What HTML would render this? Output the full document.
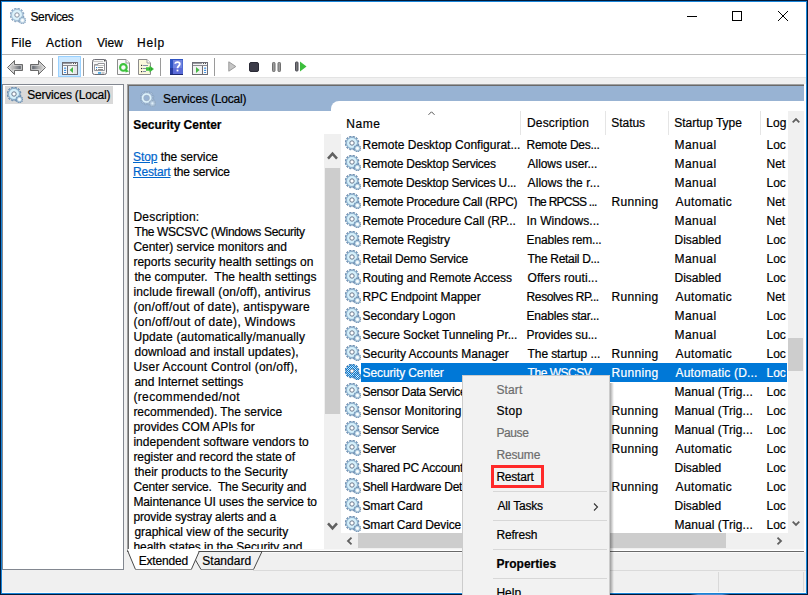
<!DOCTYPE html>
<html><head><meta charset="utf-8">
<style>
*{margin:0;padding:0;box-sizing:border-box}
html,body{width:808px;height:595px;overflow:hidden;background:#fff}
body{position:relative;font-family:"Liberation Sans",sans-serif;font-size:12px;color:#000}
.a{position:absolute}
.t{position:absolute;white-space:pre;line-height:15px;-webkit-text-stroke:0.2px currentColor}
svg{position:absolute;overflow:visible}
</style></head><body>
<svg width="0" height="0" style="position:absolute">
<defs>
<radialGradient id="gg" cx="0.5" cy="0.5" r="0.5">
<stop offset="0" stop-color="#ffffff"/><stop offset="0.4" stop-color="#d9f1fb"/><stop offset="0.72" stop-color="#b0d3e8"/><stop offset="1" stop-color="#5b80a6"/>
</radialGradient>
<radialGradient id="gs" cx="0.5" cy="0.5" r="0.5">
<stop offset="0" stop-color="#ffffff"/><stop offset="0.5" stop-color="#cfe6f2"/><stop offset="1" stop-color="#5b80a6"/>
</radialGradient>
<pattern id="dith" width="2" height="2" patternUnits="userSpaceOnUse"><rect x="0" y="0" width="1" height="1" fill="#0078d7"/><rect x="1" y="1" width="1" height="1" fill="#0078d7"/></pattern>
<mask id="gm" maskUnits="userSpaceOnUse" x="0" y="0" width="16" height="16"><path fill="#fff" stroke="#fff" stroke-width="0.5" d="M12.70,7.00 L12.67,7.60 L14.04,7.93 L13.56,9.72 L12.21,9.32 L11.94,9.85 L11.61,10.35 L12.63,11.32 L11.32,12.63 L10.35,11.61 L9.85,11.94 L9.32,12.21 L9.72,13.56 L7.93,14.04 L7.60,12.67 L7.00,12.70 L6.40,12.67 L6.07,14.04 L4.28,13.56 L4.68,12.21 L4.15,11.94 L3.65,11.61 L2.68,12.63 L1.37,11.32 L2.39,10.35 L2.06,9.85 L1.79,9.32 L0.44,9.72 L-0.04,7.93 L1.33,7.60 L1.30,7.00 L1.33,6.40 L-0.04,6.07 L0.44,4.28 L1.79,4.68 L2.06,4.15 L2.39,3.65 L1.37,2.68 L2.68,1.37 L3.65,2.39 L4.15,2.06 L4.68,1.79 L4.28,0.44 L6.07,-0.04 L6.40,1.33 L7.00,1.30 L7.60,1.33 L7.93,-0.04 L9.72,0.44 L9.32,1.79 L9.85,2.06 L10.35,2.39 L11.32,1.37 L12.63,2.68 L11.61,3.65 L11.94,4.15 L12.21,4.68 L13.56,4.28 L14.04,6.07 L12.67,6.40 Z"/><path fill="#fff" stroke="#fff" stroke-width="0.45" d="M14.87,11.60 L14.95,11.91 L15.96,11.84 L15.96,12.96 L14.95,12.89 L14.87,13.20 L14.75,13.51 L15.61,14.03 L14.95,14.95 L14.18,14.30 L13.93,14.50 L13.65,14.68 L14.03,15.61 L12.96,15.96 L12.73,14.98 L12.40,15.00 L12.07,14.98 L11.84,15.96 L10.77,15.61 L11.15,14.68 L10.87,14.50 L10.62,14.30 L9.85,14.95 L9.19,14.03 L10.05,13.51 L9.93,13.20 L9.85,12.89 L8.84,12.96 L8.84,11.84 L9.85,11.91 L9.93,11.60 L10.05,11.29 L9.19,10.77 L9.85,9.85 L10.62,10.50 L10.87,10.30 L11.15,10.12 L10.77,9.19 L11.84,8.84 L12.07,9.82 L12.40,9.80 L12.73,9.82 L12.96,8.84 L14.03,9.19 L13.65,10.12 L13.93,10.30 L14.18,10.50 L14.95,9.85 L15.61,10.77 L14.75,11.29 Z"/><circle cx="7" cy="7" r="2.1" fill="#000"/></mask>
<symbol id="gear" viewBox="0 0 16 16">
<path fill="url(#gg)" stroke="#6587ab" stroke-width="0.5" d="M12.70,7.00 L12.67,7.60 L14.04,7.93 L13.56,9.72 L12.21,9.32 L11.94,9.85 L11.61,10.35 L12.63,11.32 L11.32,12.63 L10.35,11.61 L9.85,11.94 L9.32,12.21 L9.72,13.56 L7.93,14.04 L7.60,12.67 L7.00,12.70 L6.40,12.67 L6.07,14.04 L4.28,13.56 L4.68,12.21 L4.15,11.94 L3.65,11.61 L2.68,12.63 L1.37,11.32 L2.39,10.35 L2.06,9.85 L1.79,9.32 L0.44,9.72 L-0.04,7.93 L1.33,7.60 L1.30,7.00 L1.33,6.40 L-0.04,6.07 L0.44,4.28 L1.79,4.68 L2.06,4.15 L2.39,3.65 L1.37,2.68 L2.68,1.37 L3.65,2.39 L4.15,2.06 L4.68,1.79 L4.28,0.44 L6.07,-0.04 L6.40,1.33 L7.00,1.30 L7.60,1.33 L7.93,-0.04 L9.72,0.44 L9.32,1.79 L9.85,2.06 L10.35,2.39 L11.32,1.37 L12.63,2.68 L11.61,3.65 L11.94,4.15 L12.21,4.68 L13.56,4.28 L14.04,6.07 L12.67,6.40 Z"/>
<circle cx="7" cy="7" r="4.0" fill="none" stroke="#d8f2fc" stroke-width="1.4"/>
<circle cx="7" cy="7" r="2.2" fill="#fff" stroke="#66768c" stroke-width="1"/>
<path fill="url(#gs)" stroke="#6c90b4" stroke-width="0.45" d="M14.87,11.60 L14.95,11.91 L15.96,11.84 L15.96,12.96 L14.95,12.89 L14.87,13.20 L14.75,13.51 L15.61,14.03 L14.95,14.95 L14.18,14.30 L13.93,14.50 L13.65,14.68 L14.03,15.61 L12.96,15.96 L12.73,14.98 L12.40,15.00 L12.07,14.98 L11.84,15.96 L10.77,15.61 L11.15,14.68 L10.87,14.50 L10.62,14.30 L9.85,14.95 L9.19,14.03 L10.05,13.51 L9.93,13.20 L9.85,12.89 L8.84,12.96 L8.84,11.84 L9.85,11.91 L9.93,11.60 L10.05,11.29 L9.19,10.77 L9.85,9.85 L10.62,10.50 L10.87,10.30 L11.15,10.12 L10.77,9.19 L11.84,8.84 L12.07,9.82 L12.40,9.80 L12.73,9.82 L12.96,8.84 L14.03,9.19 L13.65,10.12 L13.93,10.30 L14.18,10.50 L14.95,9.85 L15.61,10.77 L14.75,11.29 Z"/>
<circle cx="12.4" cy="12.4" r="1.1" fill="#fff"/>
</symbol>
<symbol id="gearf" viewBox="0 0 16 16">
<path fill="#a9bfd8" stroke="#7f98b4" stroke-width="0.5" d="M12.70,7.00 L12.67,7.60 L14.04,7.93 L13.56,9.72 L12.21,9.32 L11.94,9.85 L11.61,10.35 L12.63,11.32 L11.32,12.63 L10.35,11.61 L9.85,11.94 L9.32,12.21 L9.72,13.56 L7.93,14.04 L7.60,12.67 L7.00,12.70 L6.40,12.67 L6.07,14.04 L4.28,13.56 L4.68,12.21 L4.15,11.94 L3.65,11.61 L2.68,12.63 L1.37,11.32 L2.39,10.35 L2.06,9.85 L1.79,9.32 L0.44,9.72 L-0.04,7.93 L1.33,7.60 L1.30,7.00 L1.33,6.40 L-0.04,6.07 L0.44,4.28 L1.79,4.68 L2.06,4.15 L2.39,3.65 L1.37,2.68 L2.68,1.37 L3.65,2.39 L4.15,2.06 L4.68,1.79 L4.28,0.44 L6.07,-0.04 L6.40,1.33 L7.00,1.30 L7.60,1.33 L7.93,-0.04 L9.72,0.44 L9.32,1.79 L9.85,2.06 L10.35,2.39 L11.32,1.37 L12.63,2.68 L11.61,3.65 L11.94,4.15 L12.21,4.68 L13.56,4.28 L14.04,6.07 L12.67,6.40 Z"/>
<circle cx="6.6" cy="7" r="3.9" fill="#98b3d3" stroke="#def3fb" stroke-width="1.9"/>
<circle cx="6.6" cy="7" r="2.9" fill="none" stroke="#a0a8b8" stroke-width="0.5"/>
<path fill="#b4c9de" stroke="#8aa0b8" stroke-width="0.45" d="M14.87,11.60 L14.95,11.91 L15.96,11.84 L15.96,12.96 L14.95,12.89 L14.87,13.20 L14.75,13.51 L15.61,14.03 L14.95,14.95 L14.18,14.30 L13.93,14.50 L13.65,14.68 L14.03,15.61 L12.96,15.96 L12.73,14.98 L12.40,15.00 L12.07,14.98 L11.84,15.96 L10.77,15.61 L11.15,14.68 L10.87,14.50 L10.62,14.30 L9.85,14.95 L9.19,14.03 L10.05,13.51 L9.93,13.20 L9.85,12.89 L8.84,12.96 L8.84,11.84 L9.85,11.91 L9.93,11.60 L10.05,11.29 L9.19,10.77 L9.85,9.85 L10.62,10.50 L10.87,10.30 L11.15,10.12 L10.77,9.19 L11.84,8.84 L12.07,9.82 L12.40,9.80 L12.73,9.82 L12.96,8.84 L14.03,9.19 L13.65,10.12 L13.93,10.30 L14.18,10.50 L14.95,9.85 L15.61,10.77 L14.75,11.29 Z"/>
<circle cx="12.4" cy="12.4" r="1.1" fill="#dfeef7"/>
</symbol>
</defs>
</svg>

<!-- window border -->

<!-- title bar -->
<svg style="left:10px;top:8px;opacity:.8" width="16" height="16"><use href="#gear"/></svg>
<div class="a" style="left:687px;top:16px;width:10px;height:1px;background:#000"></div>
<div class="a" style="left:732px;top:11px;width:10px;height:10px;border:1px solid #000"></div>
<svg style="left:778px;top:11px" width="10" height="10"><path d="M0,0 L10,10 M10,0 L0,10" stroke="#000" stroke-width="1"/></svg>

<!-- menu bar -->
<div class="a" style="left:2px;top:54px;width:804px;height:1px;background:#b4b4b4"></div>

<!-- toolbar area -->
<div class="a" style="left:2px;top:77px;width:804px;height:1px;background:#e3e3e3"></div>
<div class="a" style="left:2px;top:78px;width:804px;height:515px;background:#f0f0f0"></div>


<!-- toolbar icons -->
<svg style="left:7px;top:60px" width="16" height="15"><defs><linearGradient id="ag" x1="0" y1="0" x2="1" y2="0"><stop offset="0" stop-color="#e0e0e0"/><stop offset="0.45" stop-color="#b0b0b0"/><stop offset="0.8" stop-color="#6f747c"/><stop offset="1" stop-color="#8a8a8a"/></linearGradient><linearGradient id="ag2" x1="1" y1="0" x2="0" y2="0"><stop offset="0" stop-color="#e0e0e0"/><stop offset="0.45" stop-color="#b0b0b0"/><stop offset="0.8" stop-color="#6f747c"/><stop offset="1" stop-color="#8a8a8a"/></linearGradient></defs><path d="M0.5,7.5 L7.5,0.5 L7.5,4.5 L15.5,4.5 L15.5,10.5 L7.5,10.5 L7.5,14.5 Z" fill="url(#ag)" stroke="#6a6a6a" stroke-width="1" stroke-linejoin="round"/><path d="M2,7.5 L6.5,3 L6.5,5.5 L14.5,5.5 L14.5,9.5 L6.5,9.5 L6.5,12 Z" fill="none" stroke="#e6e6e6" stroke-width="0.6"/></svg>
<svg style="left:30px;top:60px" width="16" height="15"><path d="M15.5,7.5 L8.5,0.5 L8.5,4.5 L0.5,4.5 L0.5,10.5 L8.5,10.5 L8.5,14.5 Z" fill="url(#ag2)" stroke="#6a6a6a" stroke-width="1" stroke-linejoin="round"/><path d="M14,7.5 L9.5,3 L9.5,5.5 L1.5,5.5 L1.5,9.5 L9.5,9.5 L9.5,12 Z" fill="none" stroke="#e6e6e6" stroke-width="0.6"/></svg>
<div class="a" style="left:52px;top:58px;width:1px;height:18px;background:#9a9a9a"></div>
<div class="a" style="left:58px;top:56px;width:23px;height:21px;background:#cce8ff;border:1px solid #99d1ff"></div>
<svg style="left:62px;top:62px" width="16" height="13"><rect x="0.5" y="0.5" width="15" height="12" fill="#f2f2f2" stroke="#6d6d75"/><line x1="1" y1="1.5" x2="10" y2="1.5" stroke="#9a9aa0"/><rect x="11" y="1" width="1" height="1" fill="#555"/><rect x="13" y="1" width="1" height="1" fill="#555"/><line x1="1" y1="3.5" x2="15" y2="3.5" stroke="#8a8a90"/><line x1="5.5" y1="4" x2="5.5" y2="12" stroke="#6d6d75"/><rect x="1" y="4" width="4" height="8" fill="#fafafa"/><rect x="2" y="5.5" width="2.2" height="1.2" rx="0.5" fill="#3d8ee0"/><rect x="2" y="7.7" width="2.2" height="1.2" rx="0.5" fill="#3d8ee0"/><rect x="2" y="9.9" width="2.2" height="1.2" rx="0.5" fill="#3d8ee0"/><rect x="12" y="4" width="3" height="8" fill="#e6e6e6"/><path d="M11,5 L7.6,8 L11,11 Z" fill="#45b845"/></svg>
<div class="a" style="left:83px;top:58px;width:1px;height:18px;background:#9a9a9a"></div>
<svg style="left:92px;top:59px" width="15" height="16"><rect x="0.5" y="0.5" width="14" height="15" rx="2" fill="#f7f7f7" stroke="#6d6d75"/><rect x="12" y="1" width="1.5" height="1.5" fill="#555"/><line x1="1" y1="2.5" x2="11" y2="2.5" stroke="#c8c8c8"/><path d="M2.5,5.5 L6,5.5 L6,4.5 L12.5,4.5 L12.5,11.5 L2.5,11.5 Z" fill="#fff" stroke="#8a8a90" stroke-width="0.9"/><line x1="3" y1="6.5" x2="12" y2="6.5" stroke="#c0c0c0"/><rect x="4" y="8" width="1.2" height="1.2" fill="#2b8ae0"/><line x1="6" y1="8.5" x2="11" y2="8.5" stroke="#8a8a8a"/><rect x="4" y="10" width="1" height="1" fill="#777"/><line x1="6" y1="10.5" x2="11" y2="10.5" stroke="#8a8a8a"/><rect x="6" y="13.2" width="3" height="1.5" fill="#2b9be0"/><rect x="9.5" y="13.2" width="3" height="1.5" fill="#bbb"/></svg>
<svg style="left:117px;top:59px" width="14" height="16"><path d="M0.5,0.5 L9,0.5 L12.5,4 L12.5,15.5 L0.5,15.5 Z" fill="#fafafa" stroke="#8c8c8c"/><path d="M9,0.5 L9,4 L12.5,4" fill="#fff" stroke="#9a9a9a"/><circle cx="6.4" cy="8.4" r="3.3" fill="none" stroke="#3cc23c" stroke-width="2.1"/><path d="M7.6,9.6 L12.2,12.2 L8.6,13.4 Z" fill="#3cc23c"/></svg>
<svg style="left:138px;top:59px" width="17" height="16"><path d="M0.5,0.5 L9,0.5 L12.5,4 L12.5,15.5 L0.5,15.5 Z" fill="#fbf8dc" stroke="#8c8c8c"/><path d="M9,0.5 L9,4 L12.5,4" fill="#fff" stroke="#9a9a9a"/><rect x="3" y="5.8" width="1.2" height="1.2" fill="#333"/><line x1="5" y1="6.5" x2="10" y2="6.5" stroke="#8290a8"/><rect x="3" y="8.9" width="1.2" height="1.2" fill="#333"/><line x1="5" y1="9.5" x2="8" y2="9.5" stroke="#8290a8"/><rect x="3" y="12" width="1.2" height="1.2" fill="#333"/><line x1="5" y1="12.5" x2="8" y2="12.5" stroke="#8290a8"/><path d="M8,8.3 L11.5,8.3 L11.5,6.5 L16,10 L11.5,13.5 L11.5,11.7 L8,11.7 Z" fill="#3cc23c"/><rect x="11" y="9.5" width="1" height="1" fill="#2a6a2a"/><rect x="13" y="9.5" width="1" height="1" fill="#2a6a2a"/></svg>
<div class="a" style="left:160px;top:58px;width:1px;height:18px;background:#9a9a9a"></div>
<svg style="left:170px;top:59px" width="13" height="16"><rect x="0" y="0" width="13" height="16" fill="#2f54c4"/><rect x="3" y="1" width="9.5" height="14" fill="#7083e0"/><rect x="0" y="9" width="3" height="7" fill="#263a9e"/><rect x="3" y="9" width="9.5" height="6" fill="#5a6ad8"/><rect x="0" y="15" width="13" height="1" fill="#1d2a70"/><path d="M5.2,4.8 C5.2,2.5 9.8,2.5 9.8,5 C9.8,7 7.5,7 7.5,9.2" fill="none" stroke="#fff" stroke-width="1.8"/><rect x="6.6" y="10.6" width="1.8" height="1.8" fill="#fff"/></svg>
<svg style="left:192px;top:62px" width="16" height="13"><rect x="0.5" y="0.5" width="15" height="12" fill="#f2f2f2" stroke="#6d6d75"/><line x1="1" y1="1.5" x2="10" y2="1.5" stroke="#9a9aa0"/><rect x="11" y="1" width="1" height="1" fill="#555"/><rect x="13" y="1" width="1" height="1" fill="#555"/><line x1="1" y1="3.5" x2="15" y2="3.5" stroke="#8a8a90"/><line x1="10.5" y1="4" x2="10.5" y2="12" stroke="#6d6d75"/><rect x="11" y="4" width="4" height="8" fill="#fafafa"/><rect x="12" y="5.5" width="2.2" height="1.2" rx="0.5" fill="#3d8ee0"/><rect x="12" y="7.7" width="2.2" height="1.2" rx="0.5" fill="#3d8ee0"/><rect x="12" y="9.9" width="2.2" height="1.2" rx="0.5" fill="#3d8ee0"/><path d="M4,5 L7.6,8 L4,11 Z" fill="#45b845"/></svg>
<div class="a" style="left:214px;top:58px;width:1px;height:18px;background:#9a9a9a"></div>
<svg style="left:228px;top:61px" width="9" height="11"><path d="M0.8,0.8 L7.8,5.5 L0.8,10.2 Z" fill="#c6c6c6" stroke="#9a9a9a" stroke-width="1"/></svg>
<svg style="left:249px;top:62px" width="10" height="10"><rect x="0.5" y="0.5" width="9" height="9" rx="1.5" fill="#3b3b48" stroke="#2a2a35"/></svg>
<svg style="left:272px;top:62px" width="9" height="10"><rect x="0.5" y="0.5" width="2.5" height="9" rx="0.8" fill="#9a9a9a" stroke="#6f6f6f" stroke-width="1"/><rect x="6" y="0.5" width="2.5" height="9" rx="0.8" fill="#9a9a9a" stroke="#6f6f6f" stroke-width="1"/></svg>
<svg style="left:295px;top:61px" width="12" height="11"><rect x="0.5" y="1" width="2.5" height="9" rx="0.8" fill="#777" stroke="#4a4a55" stroke-width="1"/><path d="M5,0.5 L11.5,5.5 L5,10.5 Z" fill="#3cbe3c"/></svg>

<!-- left pane -->
<div class="a" style="left:2px;top:84px;width:122px;height:486px;background:#fff;border:1px solid #828790"></div>
<div class="a" style="left:5px;top:86px;width:108px;height:18px;background:#d9d9d9"></div>
<svg style="left:7px;top:87px" width="16" height="16"><use href="#gear"/></svg>

<!-- right panel -->
<div class="a" style="left:127px;top:84px;width:680px;height:468px;background:#fff;border-left:1px solid #a0a0a0;border-top:1px solid #a0a0a0"></div>
<div class="a" style="left:128px;top:85px;width:678px;height:467px;border-left:1px solid #696969;border-top:1px solid #696969"></div>
<div class="a" style="left:129px;top:86px;width:675px;height:25px;background:#98b3d3"></div>
<svg style="left:140px;top:91px" width="16" height="16"><use href="#gearf"/></svg>



<div class="t" style="left:30.50px;top:10.40px;letter-spacing:-0.386px">Services</div>
<div class="t" style="left:11.20px;top:36.00px;letter-spacing:0.267px">File</div>
<div class="t" style="left:46.00px;top:36.00px;letter-spacing:0.520px">Action</div>
<div class="t" style="left:97.00px;top:36.00px">View</div>
<div class="t" style="left:137.00px;top:36.00px;letter-spacing:0.867px">Help</div>
<div class="t" style="left:27.20px;top:88.00px;letter-spacing:-0.187px">Services (Local)</div>
<div class="t" style="left:163.10px;top:92.00px;letter-spacing:-0.167px">Services (Local)</div>
<div class="a" style="left:129px;top:111px;width:195px;height:440px;background:#fff"></div><div class="a" style="left:129px;top:111px;width:195px;height:438px;overflow:hidden">
<div class="t" style="left:4.20px;top:6.60px;letter-spacing:-0.029px;font-weight:bold">Security Center</div>
<div class="t" style="left:4.00px;top:39.30px;letter-spacing:-0.067px"><span style="color:#0066cc;text-decoration:underline">Stop</span> the service</div>
<div class="t" style="left:4.00px;top:54.40px;letter-spacing:-0.167px"><span style="color:#0066cc;text-decoration:underline">Restart</span> the service</div>
<div class="t" style="left:4.40px;top:99.40px;letter-spacing:0.218px">Description:</div>
<div class="t" style="left:5.40px;top:114.40px;letter-spacing:-0.322px">The WSCSVC (Windows Security</div>
<div class="t" style="left:4.40px;top:129.40px;letter-spacing:-0.019px">Center) service monitors and</div>
<div class="t" style="left:4.40px;top:144.40px;letter-spacing:0.015px">reports security health settings on</div>
<div class="t" style="left:5.40px;top:159.40px;letter-spacing:0.048px">the computer.  The health settings</div>
<div class="t" style="left:4.40px;top:174.40px;letter-spacing:0.171px">include firewall (on/off), antivirus</div>
<div class="t" style="left:4.40px;top:189.40px;letter-spacing:0.244px">(on/off/out of date), antispyware</div>
<div class="t" style="left:4.40px;top:204.40px;letter-spacing:0.307px">(on/off/out of date), Windows</div>
<div class="t" style="left:4.40px;top:219.40px;letter-spacing:0.141px">Update (automatically/manually</div>
<div class="t" style="left:5.40px;top:234.40px;letter-spacing:0.072px">download and install updates),</div>
<div class="t" style="left:4.40px;top:249.40px;letter-spacing:0.221px">User Account Control (on/off),</div>
<div class="t" style="left:5.40px;top:264.40px">and Internet settings</div>
<div class="t" style="left:4.40px;top:279.40px;letter-spacing:0.367px">(recommended/not</div>
<div class="t" style="left:4.40px;top:294.40px;letter-spacing:-0.017px">recommended). The service</div>
<div class="t" style="left:4.40px;top:309.40px;letter-spacing:-0.035px">provides COM APIs for</div>
<div class="t" style="left:4.40px;top:324.40px;letter-spacing:0.043px">independent software vendors to</div>
<div class="t" style="left:4.40px;top:339.40px;letter-spacing:-0.058px">register and record the state of</div>
<div class="t" style="left:5.40px;top:354.40px;letter-spacing:0.024px">their products to the Security</div>
<div class="t" style="left:4.40px;top:369.40px;letter-spacing:-0.153px">Center service.  The Security and</div>
<div class="t" style="left:4.40px;top:384.40px;letter-spacing:-0.115px">Maintenance UI uses the service to</div>
<div class="t" style="left:4.40px;top:399.40px;letter-spacing:-0.144px">provide systray alerts and a</div>
<div class="t" style="left:5.40px;top:414.40px;letter-spacing:-0.010px">graphical view of the security</div>
<div class="t" style="left:4.40px;top:429.40px;letter-spacing:-0.053px">health states in the Security and</div>
</div>
<div class="a" style="left:331px;top:101px;width:473px;height:432px;background:#fff;border-top-left-radius:8px;overflow:hidden">
<div class="t" style="left:15.30px;top:15.60px;letter-spacing:0.500px">Name</div>
<svg style="left:97px;top:10px" width="8" height="5"><path d="M0.5,3.8 L3.5,0.8 L6.5,3.8" fill="none" stroke="#555" stroke-width="1"/></svg>
<div class="a" style="left:189px;top:10px;width:1px;height:24px;background:#e5e5e5"></div>
<div class="a" style="left:274px;top:10px;width:1px;height:24px;background:#e5e5e5"></div>
<div class="a" style="left:337px;top:10px;width:1px;height:24px;background:#e5e5e5"></div>
<div class="a" style="left:429px;top:10px;width:1px;height:24px;background:#e5e5e5"></div>
<div class="t" style="left:195.90px;top:15.30px;letter-spacing:0.200px">Description</div>
<div class="t" style="left:280.20px;top:15.30px;letter-spacing:-0.020px">Status</div>
<div class="t" style="left:343.30px;top:15.30px;letter-spacing:-0.018px">Startup Type</div>
<div class="t" style="left:435.30px;top:15.30px">Log</div>
<svg style="left:14px;top:35px" width="16" height="16"><use href="#gear"/></svg>
<div class="t" style="left:31.50px;top:37.40px;letter-spacing:-0.007px">Remote Desktop Configurat...</div>
<div class="t" style="left:195.60px;top:37.40px;letter-spacing:-0.283px">Remote Des...</div>
<div class="t" style="left:343.50px;top:37.40px;letter-spacing:0.440px">Manual</div>
<div class="t" style="left:435.50px;top:37.40px">Loc</div>
<svg style="left:14px;top:54px" width="16" height="16"><use href="#gear"/></svg>
<div class="t" style="left:31.50px;top:56.40px;letter-spacing:-0.236px">Remote Desktop Services</div>
<div class="t" style="left:196.60px;top:56.40px;letter-spacing:-0.069px">Allows user...</div>
<div class="t" style="left:343.50px;top:56.40px;letter-spacing:0.440px">Manual</div>
<div class="t" style="left:435.50px;top:56.40px">Net</div>
<svg style="left:14px;top:73px" width="16" height="16"><use href="#gear"/></svg>
<div class="t" style="left:31.50px;top:75.40px;letter-spacing:-0.252px">Remote Desktop Services U...</div>
<div class="t" style="left:196.60px;top:75.40px;letter-spacing:0.057px">Allows the r...</div>
<div class="t" style="left:343.50px;top:75.40px;letter-spacing:0.440px">Manual</div>
<div class="t" style="left:435.50px;top:75.40px">Loc</div>
<svg style="left:14px;top:92px" width="16" height="16"><use href="#gear"/></svg>
<div class="t" style="left:31.50px;top:94.40px;letter-spacing:-0.242px">Remote Procedure Call (RPC)</div>
<div class="t" style="left:196.60px;top:94.40px;letter-spacing:-0.742px">The RPCSS ...</div>
<div class="t" style="left:280.60px;top:94.40px;letter-spacing:0.317px">Running</div>
<div class="t" style="left:344.50px;top:94.40px;letter-spacing:0.375px">Automatic</div>
<div class="t" style="left:435.50px;top:94.40px">Net</div>
<svg style="left:14px;top:111px" width="16" height="16"><use href="#gear"/></svg>
<div class="t" style="left:31.50px;top:113.40px;letter-spacing:-0.144px">Remote Procedure Call (RP...</div>
<div class="t" style="left:195.60px;top:113.40px;letter-spacing:0.067px">In Windows...</div>
<div class="t" style="left:343.50px;top:113.40px;letter-spacing:0.440px">Manual</div>
<div class="t" style="left:435.50px;top:113.40px">Net</div>
<svg style="left:14px;top:130px" width="16" height="16"><use href="#gear"/></svg>
<div class="t" style="left:31.50px;top:132.40px;letter-spacing:-0.136px">Remote Registry</div>
<div class="t" style="left:195.60px;top:132.40px;letter-spacing:-0.177px">Enables rem...</div>
<div class="t" style="left:343.50px;top:132.40px">Disabled</div>
<div class="t" style="left:435.50px;top:132.40px">Loc</div>
<svg style="left:14px;top:149px" width="16" height="16"><use href="#gear"/></svg>
<div class="t" style="left:31.50px;top:151.40px;letter-spacing:-0.200px">Retail Demo Service</div>
<div class="t" style="left:196.60px;top:151.40px;letter-spacing:-0.314px">The Retail D...</div>
<div class="t" style="left:343.50px;top:151.40px;letter-spacing:0.440px">Manual</div>
<div class="t" style="left:435.50px;top:151.40px">Loc</div>
<svg style="left:14px;top:168px" width="16" height="16"><use href="#gear"/></svg>
<div class="t" style="left:31.50px;top:170.40px;letter-spacing:-0.083px">Routing and Remote Access</div>
<div class="t" style="left:196.60px;top:170.40px;letter-spacing:0.079px">Offers routi...</div>
<div class="t" style="left:343.50px;top:170.40px">Disabled</div>
<div class="t" style="left:435.50px;top:170.40px">Loc</div>
<svg style="left:14px;top:187px" width="16" height="16"><use href="#gear"/></svg>
<div class="t" style="left:31.50px;top:189.40px;letter-spacing:-0.106px">RPC Endpoint Mapper</div>
<div class="t" style="left:195.60px;top:189.40px;letter-spacing:-0.400px">Resolves RP...</div>
<div class="t" style="left:280.60px;top:189.40px;letter-spacing:0.317px">Running</div>
<div class="t" style="left:344.50px;top:189.40px;letter-spacing:0.375px">Automatic</div>
<div class="t" style="left:435.50px;top:189.40px">Net</div>
<svg style="left:14px;top:206px" width="16" height="16"><use href="#gear"/></svg>
<div class="t" style="left:31.50px;top:208.40px;letter-spacing:-0.086px">Secondary Logon</div>
<div class="t" style="left:195.60px;top:208.40px;letter-spacing:-0.229px">Enables star...</div>
<div class="t" style="left:343.50px;top:208.40px;letter-spacing:0.440px">Manual</div>
<div class="t" style="left:435.50px;top:208.40px">Loc</div>
<svg style="left:14px;top:225px" width="16" height="16"><use href="#gear"/></svg>
<div class="t" style="left:31.50px;top:227.40px;letter-spacing:-0.114px">Secure Socket Tunneling Pr...</div>
<div class="t" style="left:195.60px;top:227.40px;letter-spacing:-0.146px">Provides su...</div>
<div class="t" style="left:343.50px;top:227.40px;letter-spacing:0.440px">Manual</div>
<div class="t" style="left:435.50px;top:227.40px">Loc</div>
<svg style="left:14px;top:244px" width="16" height="16"><use href="#gear"/></svg>
<div class="t" style="left:31.50px;top:246.40px;letter-spacing:0.008px">Security Accounts Manager</div>
<div class="t" style="left:196.60px;top:246.40px;letter-spacing:-0.100px">The startup ...</div>
<div class="t" style="left:280.60px;top:246.40px;letter-spacing:0.317px">Running</div>
<div class="t" style="left:344.50px;top:246.40px;letter-spacing:0.375px">Automatic</div>
<div class="t" style="left:435.50px;top:246.40px">Loc</div>
<div class="a" style="left:30px;top:262px;width:426px;height:19px;background:#0078d7"></div>
<svg style="left:14px;top:263px" width="16" height="16"><use href="#gear"/></svg>
<svg style="left:14px;top:263px" width="16" height="16"><rect width="16" height="16" fill="url(#dith)" mask="url(#gm)"/></svg>
<div class="t" style="left:31.50px;top:265.40px;letter-spacing:-0.100px;color:#fff">Security Center</div>
<div class="t" style="left:196.60px;top:265.40px;letter-spacing:-0.473px;color:#fff">The WSCSV...</div>
<div class="t" style="left:280.60px;top:265.40px;letter-spacing:0.317px;color:#fff">Running</div>
<div class="t" style="left:344.50px;top:265.40px;letter-spacing:0.179px;color:#fff">Automatic (D...</div>
<div class="t" style="left:435.50px;top:265.40px;color:#fff">Loc</div>
<svg style="left:14px;top:282px" width="16" height="16"><use href="#gear"/></svg>
<div class="t" style="left:31.50px;top:284.40px;letter-spacing:-0.324px">Sensor Data Service</div>
<div class="t" style="left:195.60px;top:284.40px;letter-spacing:-0.043px">Delivers dat...</div>
<div class="t" style="left:343.50px;top:284.40px;letter-spacing:0.093px">Manual (Trig...</div>
<div class="t" style="left:435.50px;top:284.40px">Loc</div>
<svg style="left:14px;top:301px" width="16" height="16"><use href="#gear"/></svg>
<div class="t" style="left:31.50px;top:303.40px;letter-spacing:0.094px">Sensor Monitoring Service</div>
<div class="t" style="left:195.60px;top:303.40px;letter-spacing:0.031px">Monitors va...</div>
<div class="t" style="left:280.60px;top:303.40px;letter-spacing:0.317px">Running</div>
<div class="t" style="left:343.50px;top:303.40px;letter-spacing:0.093px">Manual (Trig...</div>
<div class="t" style="left:435.50px;top:303.40px">Loc</div>
<svg style="left:14px;top:320px" width="16" height="16"><use href="#gear"/></svg>
<div class="t" style="left:31.50px;top:322.40px;letter-spacing:-0.362px">Sensor Service</div>
<div class="t" style="left:196.60px;top:322.40px;letter-spacing:-0.043px">A service fo...</div>
<div class="t" style="left:280.60px;top:322.40px;letter-spacing:0.317px">Running</div>
<div class="t" style="left:343.50px;top:322.40px;letter-spacing:0.093px">Manual (Trig...</div>
<div class="t" style="left:435.50px;top:322.40px">Loc</div>
<svg style="left:14px;top:339px" width="16" height="16"><use href="#gear"/></svg>
<div class="t" style="left:31.50px;top:341.40px;letter-spacing:-0.360px">Server</div>
<div class="t" style="left:195.60px;top:341.40px;letter-spacing:0.171px">Supports fil...</div>
<div class="t" style="left:280.60px;top:341.40px;letter-spacing:0.317px">Running</div>
<div class="t" style="left:344.50px;top:341.40px;letter-spacing:0.375px">Automatic</div>
<div class="t" style="left:435.50px;top:341.40px">Loc</div>
<svg style="left:14px;top:358px" width="16" height="16"><use href="#gear"/></svg>
<div class="t" style="left:31.50px;top:360.40px;letter-spacing:-0.240px">Shared PC Account Manager</div>
<div class="t" style="left:195.60px;top:360.40px;letter-spacing:-0.050px">Manages pr...</div>
<div class="t" style="left:343.50px;top:360.40px">Disabled</div>
<div class="t" style="left:435.50px;top:360.40px">Loc</div>
<svg style="left:14px;top:377px" width="16" height="16"><use href="#gear"/></svg>
<div class="t" style="left:31.50px;top:379.40px;letter-spacing:-0.244px">Shell Hardware Detection</div>
<div class="t" style="left:195.60px;top:379.40px;letter-spacing:-0.046px">Provides no...</div>
<div class="t" style="left:280.60px;top:379.40px;letter-spacing:0.317px">Running</div>
<div class="t" style="left:344.50px;top:379.40px;letter-spacing:0.375px">Automatic</div>
<div class="t" style="left:435.50px;top:379.40px">Loc</div>
<svg style="left:14px;top:396px" width="16" height="16"><use href="#gear"/></svg>
<div class="t" style="left:31.50px;top:398.40px;letter-spacing:-0.133px">Smart Card</div>
<div class="t" style="left:195.60px;top:398.40px;letter-spacing:-0.217px">Manages ac...</div>
<div class="t" style="left:343.50px;top:398.40px">Disabled</div>
<div class="t" style="left:435.50px;top:398.40px">Loc</div>
<svg style="left:14px;top:415px" width="16" height="16"><use href="#gear"/></svg>
<div class="t" style="left:31.50px;top:417.40px;letter-spacing:-0.169px">Smart Card Device Enumera...</div>
<div class="t" style="left:195.60px;top:417.40px;letter-spacing:-0.186px">Creates soft...</div>
<div class="t" style="left:343.50px;top:417.40px;letter-spacing:0.093px">Manual (Trig...</div>
<div class="t" style="left:435.50px;top:417.40px">Loc</div>
<div class="a" style="left:457px;top:10px;width:16px;height:422px;background:#f0f0f0"></div>
<div class="a" style="left:457px;top:237px;width:15px;height:33px;background:#cdcdcd"></div>
<svg style="left:461px;top:16px" width="8" height="6"><path d="M0.7,5.3 L4,2 L7.3,5.3" fill="none" stroke="#606060" stroke-width="1.8"/></svg>
<svg style="left:461px;top:420px" width="8" height="6"><path d="M0.7,0.7 L4,4 L7.3,0.7" fill="none" stroke="#606060" stroke-width="1.8"/></svg>
</div>
<div class="a" style="left:341px;top:533px;width:463px;height:16px;background:#f0f0f0"></div>
<div class="a" style="left:358px;top:533px;width:368px;height:15px;background:#cdcdcd"></div>
<svg style="left:346px;top:537px" width="7" height="8"><path d="M5.5,0.7 L2,4 L5.5,7.3" fill="none" stroke="#606060" stroke-width="1.8"/></svg>
<svg style="left:776px;top:537px" width="7" height="8"><path d="M1.5,0.7 L5,4 L1.5,7.3" fill="none" stroke="#606060" stroke-width="1.8"/></svg>
<div class="a" style="left:324px;top:134px;width:17px;height:415px;background:#f0f0f0"></div>
<div class="a" style="left:325px;top:168px;width:15px;height:246px;background:#cdcdcd"></div>
<svg style="left:327px;top:150px" width="11" height="10"><path d="M1,8.7 L5.5,3.6 L10,8.7" fill="none" stroke="#606060" stroke-width="2.5"/></svg>
<svg style="left:327px;top:522px" width="11" height="10"><path d="M1,1.3 L5.5,6.4 L10,1.3" fill="none" stroke="#606060" stroke-width="2.5"/></svg>
<div class="a" style="left:129px;top:549px;width:675px;height:1px;background:#f7f7f7"></div>
<div class="a" style="left:129px;top:550px;width:675px;height:1px;background:#fff"></div>
<div class="a" style="left:127px;top:551px;width:677px;height:1px;background:#696969"></div>
<div class="a" style="left:127px;top:552px;width:677px;height:1px;background:#fafafa"></div>
<div class="a" style="left:127px;top:553px;width:677px;height:16px;background:#f0f0f0"></div>
<div class="a" style="left:253px;top:570px;width:553px;height:1px;background:#dadada"></div>
<svg style="left:125px;top:549px" width="140" height="22">
<path d="M66,2.5 L137,2.5 L128.5,20.5 L76,20.5 Z" fill="#f0f0f0" stroke="none"/><path d="M66,2.5 L137,2.5 L128.5,20.5" fill="none" stroke="#4a4a4a" stroke-width="1"/><path d="M76,20.5 L128.5,20.5" stroke="#8a8a8a" stroke-width="1"/><path d="M70.5,11 L76,20.5" stroke="#4a4a4a" stroke-width="1"/>
<path d="M2.5,0 L74.5,0 L66.3,20.5 L10.5,20.5 Z" fill="#fff" stroke="none"/>
<path d="M2.5,1.5 L10.5,20.5 M66.3,20.5 L74.3,2.3" fill="none" stroke="#4a4a4a" stroke-width="1"/><path d="M10.5,20.5 L66.3,20.5" stroke="#8a8a8a" stroke-width="1"/>
</svg>
<div class="t" style="left:138.70px;top:553.90px;letter-spacing:-0.171px">Extended</div>
<div class="t" style="left:202.30px;top:553.90px;letter-spacing:0.014px">Standard</div>
<div class="a" style="left:718px;top:572px;width:1px;height:20px;background:#d9d9d9"></div>
<div class="a" style="left:803px;top:572px;width:1px;height:20px;background:#d9d9d9"></div>
<div class="a" style="left:2px;top:592px;width:804px;height:1px;background:#fafafa"></div>
<div class="a" style="left:0;top:0;width:808px;height:595px;border:1px solid #001a3a"></div>
<div class="a" style="left:1px;top:1px;width:806px;height:593px;border:1px solid #1884d8"></div>
<div class="a" style="left:690px;top:594px;width:40px;height:1px;background:linear-gradient(to right,#001a3a,#4a8ad0 20%,#4a8ad0 80%,#001a3a)"></div>
<div class="a" style="left:610px;top:383px;width:4px;height:212px;background:linear-gradient(to right,rgba(0,0,0,.35),rgba(0,0,0,0))"></div>
<div class="a" style="left:462px;top:375px;width:148px;height:225px;background:#f2f2f2;border:1px solid #cccccc"></div>
<div class="t" style="left:496.40px;top:382.60px;letter-spacing:0.125px;color:#6d6d6d">Start</div>
<div class="t" style="left:496.40px;top:404.20px;letter-spacing:0.333px">Stop</div>
<div class="t" style="left:496.40px;top:426.40px;letter-spacing:-0.375px;color:#6d6d6d">Pause</div>
<div class="t" style="left:496.40px;top:448.40px;letter-spacing:-0.140px;color:#6d6d6d">Resume</div>
<div class="t" style="left:496.40px;top:470.20px;letter-spacing:-0.217px">Restart</div>
<div class="t" style="left:497.40px;top:499.00px;letter-spacing:-0.175px">All Tasks</div>
<div class="t" style="left:496.40px;top:528.30px;letter-spacing:-0.150px">Refresh</div>
<div class="t" style="left:496.40px;top:557.20px;letter-spacing:0.044px;font-weight:bold">Properties</div>
<div class="t" style="left:496.40px;top:586.20px">Help</div>
<div class="a" style="left:493px;top:491px;width:114px;height:1px;background:#d7d7d7"></div>
<div class="a" style="left:493px;top:520px;width:114px;height:1px;background:#d7d7d7"></div>
<div class="a" style="left:493px;top:549px;width:114px;height:1px;background:#d7d7d7"></div>
<div class="a" style="left:493px;top:578px;width:114px;height:1px;background:#d7d7d7"></div>
<svg style="left:593px;top:503px" width="6" height="8"><path d="M1,0.5 L4.5,4 L1,7.5" fill="none" stroke="#333" stroke-width="1.1"/></svg>
<div class="a" style="left:491px;top:465px;width:53px;height:23px;border:3px solid #ff2a2a"></div>
<div class="a" style="left:804px;top:84px;width:2px;height:468px;background:#fff"></div>
</body></html>
